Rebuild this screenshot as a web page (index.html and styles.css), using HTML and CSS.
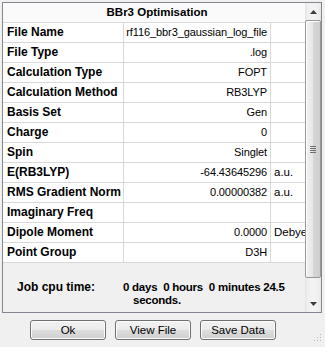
FILE: index.html
```html
<!DOCTYPE html>
<html>
<head>
<meta charset="utf-8">
<link rel="stylesheet" href="styles.css">
</head>
<body>
<div class="window">
  <div class="panel">
    <div class="content">
      <div class="grid">
        <div class="head">BBr3 Optimisation</div>
        <div class="lab">File Name</div><div class="val">rf116_bbr3_gaussian_log_file</div><div class="unit"></div>
        <div class="lab">File Type</div><div class="val">.log</div><div class="unit"></div>
        <div class="lab">Calculation Type</div><div class="val">FOPT</div><div class="unit"></div>
        <div class="lab">Calculation Method</div><div class="val">RB3LYP</div><div class="unit"></div>
        <div class="lab">Basis Set</div><div class="val">Gen</div><div class="unit"></div>
        <div class="lab">Charge</div><div class="val">0</div><div class="unit"></div>
        <div class="lab">Spin</div><div class="val">Singlet</div><div class="unit"></div>
        <div class="lab">E(RB3LYP)</div><div class="val">-64.43645296</div><div class="unit">a.u.</div>
        <div class="lab">RMS Gradient Norm</div><div class="val">0.00000382</div><div class="unit">a.u.</div>
        <div class="lab">Imaginary Freq</div><div class="val"></div><div class="unit"></div>
        <div class="lab">Dipole Moment</div><div class="val">0.0000</div><div class="unit">Debye</div>
        <div class="lab">Point Group</div><div class="val">D3H</div><div class="unit"></div>
      </div>
      <div class="job">
        <div class="job-label">Job cpu time:</div>
        <div class="job-value">0 days&nbsp; 0 hours&nbsp; 0 minutes 24.5 seconds.</div>
      </div>
    </div>
    <div class="scrollbar">
      <div class="sb-arrow">
        <svg width="7" height="4" viewBox="0 0 7 4"><path d="M0 4 L3.5 0 L7 4 Z" fill="#3c3c3c"/></svg>
      </div>
      <div class="sb-thumb">
        <div class="sb-grip"><span></span><span></span><span></span><span></span></div>
      </div>
      <div class="sb-track"></div>
      <div class="sb-arrow">
        <svg width="7" height="4" viewBox="0 0 7 4"><path d="M0 0 L3.5 4 L7 0 Z" fill="#3c3c3c"/></svg>
      </div>
    </div>
  </div>
  <div class="buttons">
    <button class="btn">Ok</button>
    <button class="btn">View File</button>
    <button class="btn">Save Data</button>
  </div>
  <div class="size-grip">
    <svg width="9" height="9" viewBox="0 0 9 9">
      <rect x="7" y="1" width="1" height="1" fill="#b4b4b4"/>
      <rect x="4" y="4" width="1" height="1" fill="#b4b4b4"/>
      <rect x="7" y="4" width="1" height="1" fill="#b4b4b4"/>
      <rect x="1" y="7" width="1" height="1" fill="#b4b4b4"/>
      <rect x="4" y="7" width="1" height="1" fill="#b4b4b4"/>
      <rect x="7" y="7" width="1" height="1" fill="#b4b4b4"/>
    </svg>
  </div>
</div>
</body>
</html>
```

FILE: styles.css
```css
* { box-sizing: border-box; }
html, body { margin: 0; padding: 0; }
body {
  background: #f0f0f0;
  font-family: "Liberation Sans", Arial, sans-serif;
  color: #000;
  width: 325px;
  height: 347px;
  overflow: hidden;
}
.window {
  position: relative;
  width: 325px;
  height: 347px;
  padding: 2px 0 0 2px;
}
.panel {
  width: 320px;
  height: 311px;
  border: 1px solid #828790;
  display: flex;
  background: #f0f0f0;
}
.content {
  width: 302px;
  overflow: hidden;
}
.grid {
  display: grid;
  grid-template-columns: 121px 147px 34px;
  grid-auto-rows: 20px;
  background: #fff;
}
.head {
  grid-column: 1 / -1;
  font-weight: bold;
  font-size: 11.5px;
  text-align: center;
  line-height: 19px;
  border-bottom: 1px solid #d9d9d9;
  background: #fafafa;
  padding-left: 6px;
}
.lab, .val, .unit {
  border-bottom: 1px solid #d9d9d9;
  line-height: 19px;
  white-space: nowrap;
  overflow: hidden;
}
.lab {
  border-right: 1px solid #d9d9d9;
  font-weight: bold;
  font-size: 12px;
  padding-left: 4px;
}
.val {
  border-right: 1px solid #d9d9d9;
  font-size: 11px;
  text-align: right;
  padding-right: 3px;
  letter-spacing: -0.1px;
}
.unit {
  font-size: 11.5px;
  padding-left: 3px;
}
.job {
  display: flex;
  margin-top: 18px;
  font-weight: bold;
  font-size: 12px;
  line-height: 13px;
}
.job-label {
  width: 120px;
  padding-left: 14px;
}
.job-value {
  width: 174px;
  padding-left: 10px;
  text-indent: -10px;
  font-size: 11.5px;
  letter-spacing: -0.25px;
}
.scrollbar {
  width: 16px;
  display: flex;
  flex-direction: column;
  background: linear-gradient(to right, #e2e2e2 0, #eeeeee 2px, #f4f4f4 50%, #eeeeee 14px, #e2e2e2 16px);
}
.sb-arrow {
  height: 17px;
  display: flex;
  align-items: center;
  justify-content: center;
}
.sb-thumb {
  height: 258px;
  border: 1px solid #979797;
  border-radius: 2px;
  background: linear-gradient(to right, #f2f2f2 0, #e6e6e6 50%, #d6d6d6 51%, #cfcfcf 100%);
  box-shadow: inset 1px 1px 0 #ffffff;
  display: flex;
  align-items: center;
  justify-content: center;
}
.sb-grip {
  display: flex;
  flex-direction: column;
  gap: 1px;
}
.sb-grip span {
  display: block;
  width: 6px;
  height: 1px;
  background: #6e6e6e;
}
.sb-track {
  flex: 1;
}
.buttons {
  display: flex;
  gap: 9px;
  padding-left: 28px;
  margin-top: 7px;
}
.btn {
  width: 76px;
  height: 20px;
  padding: 0;
  font-family: "Liberation Sans", Arial, sans-serif;
  font-size: 11.5px;
  color: #000;
  border: 1px solid #707070;
  border-radius: 3px;
  background: linear-gradient(to bottom, #f2f2f2 0, #ebebeb 50%, #dddddd 51%, #cfcfcf 100%);
  box-shadow: inset 0 0 0 1px #fcfcfc;
}
.size-grip {
  position: absolute;
  right: 3px;
  bottom: 5px;
  width: 9px;
  height: 9px;
}
.size-grip svg { display: block; }
```
